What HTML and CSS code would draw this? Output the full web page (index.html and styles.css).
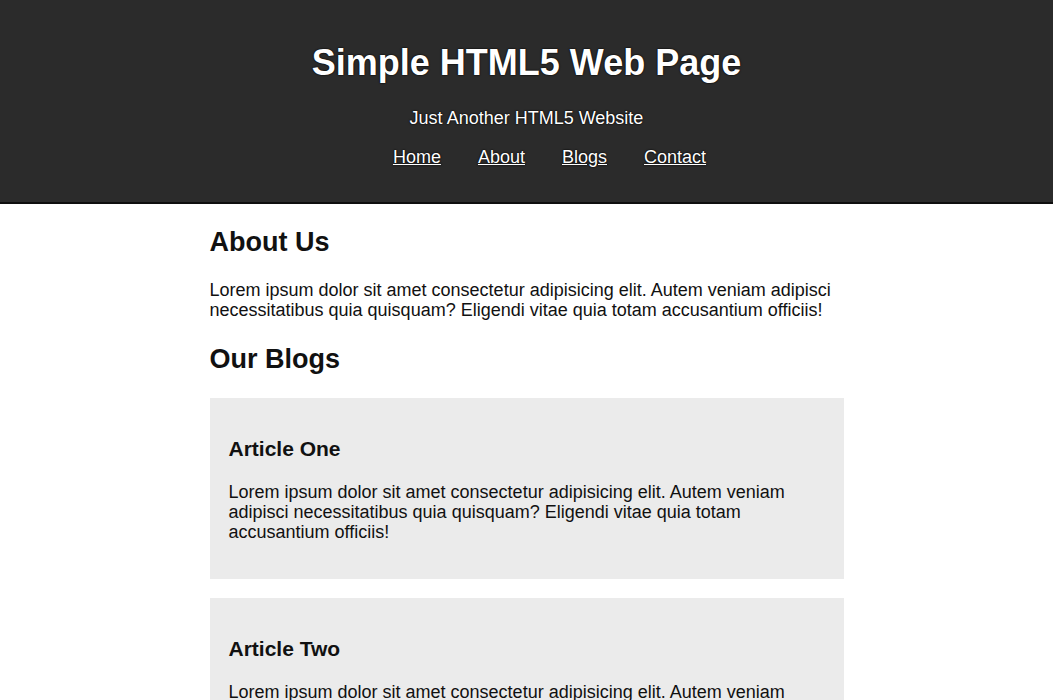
FILE: index.html
```html
<!DOCTYPE html>
<html lang="en">
<head>
<meta charset="utf-8">
<title>Simple HTML5 Web Page</title>
<link rel="stylesheet" href="styles.css">
</head>
<body>
<header class="site-header">
  <h1 class="site-title">Simple HTML5 Web Page</h1>
  <p class="site-tagline">Just Another HTML5 Website</p>
  <nav>
    <ul class="nav-list">
      <li><a href="#">Home</a></li>
      <li><a href="#">About</a></li>
      <li><a href="#">Blogs</a></li>
      <li><a href="#">Contact</a></li>
    </ul>
  </nav>
</header>
<main class="container">
  <section class="about">
    <h2 class="section-title">About Us</h2>
    <p>Lorem ipsum dolor sit amet consectetur adipisicing elit. Autem veniam adipisci necessitatibus quia quisquam? Eligendi vitae quia totam accusantium officiis!</p>
  </section>
  <section class="blogs">
    <h2 class="section-title">Our Blogs</h2>
    <article class="post">
      <h3 class="post-title">Article One</h3>
      <p>Lorem ipsum dolor sit amet consectetur adipisicing elit. Autem veniam adipisci necessitatibus quia quisquam? Eligendi vitae quia totam accusantium officiis!</p>
    </article>
    <article class="post">
      <h3 class="post-title">Article Two</h3>
      <p>Lorem ipsum dolor sit amet consectetur adipisicing elit. Autem veniam adipisci necessitatibus quia quisquam? Eligendi vitae quia totam accusantium officiis!</p>
    </article>
  </section>
</main>
</body>
</html>
```
FILE: styles.css
```css
body {
  margin: 0;
  font-family: "Liberation Sans", Arial, Helvetica, sans-serif;
  font-size: 18px;
  color: #111;
  background: #fff;
}

.site-header {
  background: #2b2b2b;
  color: #fff;
  text-align: center;
  padding: 18px 0 16px;
  border-bottom: 2px solid #0e0e0e;
  text-shadow: 0 0 1px #000, 0 0 2px #000;
}

.site-title {
  font-size: 36px;
  margin: 24px 0;
}

.site-tagline {
  margin: 18px 0;
}

.nav-list {
  list-style: none;
  margin: 18px 0;
  padding: 0 0 0 46px;
  display: flex;
  justify-content: center;
  gap: 37px;
}

.nav-list a {
  color: #fff;
  text-decoration: underline;
}

.container {
  width: 634px;
  margin: 0 auto;
}

.section-title {
  font-size: 27px;
  margin: 23px 0 22px;
}

.container p {
  margin: 18px 0;
  line-height: 20px;
}

.about p {
  margin-bottom: 24px;
}

.post {
  background: #ebebeb;
  padding: 1px 19px;
  margin: 23px 0 19px;
}

.post + .post {
  margin-top: 19px;
}

.post-title {
  font-size: 21px;
  margin: 38px 0 21px;
}

.post p {
  margin: 21px 0 36px;
}
```
